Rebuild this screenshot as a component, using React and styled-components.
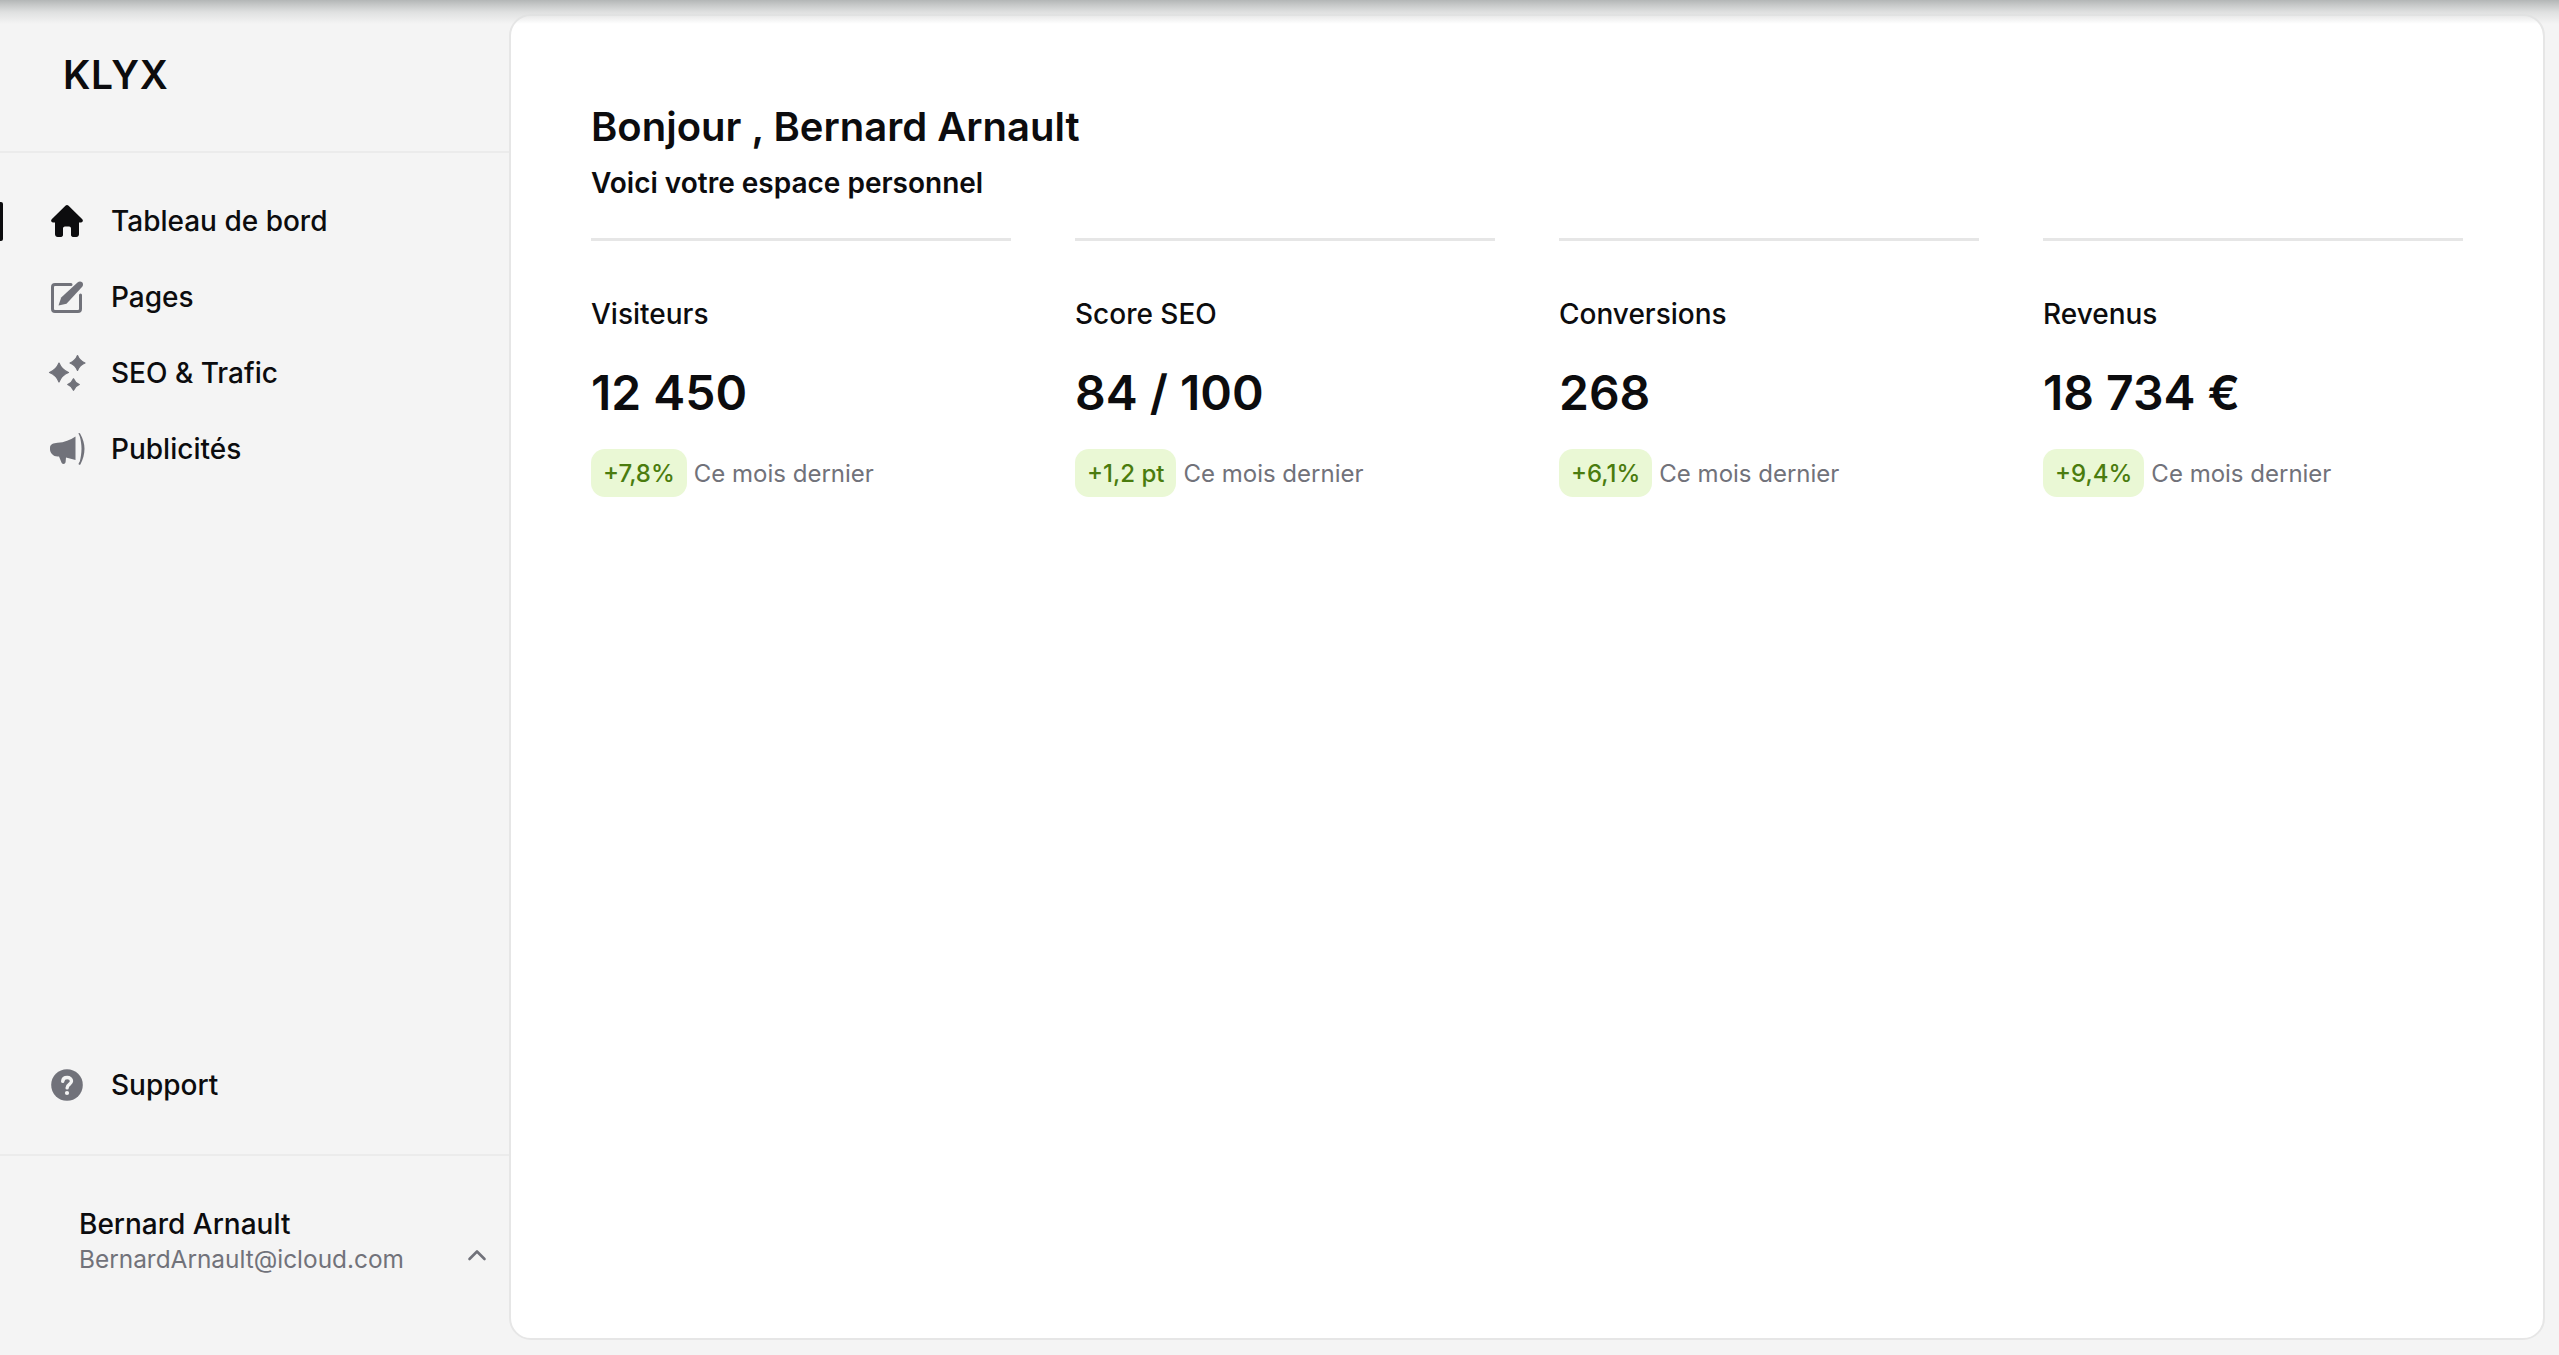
import React from "react";
import styled, { createGlobalStyle } from "styled-components";

const Global = createGlobalStyle`
  html, body { margin: 0; padding: 0; height: 100%; background: #f4f4f4; }
  body { font-family: Inter, "Liberation Sans", sans-serif; color: #0c0c0e; overflow: hidden; }
  * { box-sizing: border-box; }
`;

const Shell = styled.div`
  position: relative;
  display: flex;
  width: 2559px;
  height: 1355px;
  background: #f4f4f4;
`;
const TopShade = styled.div`
  position: absolute;
  left: 0; right: 0; top: 0;
  height: 24px;
  background: linear-gradient(180deg, #b3b6b6 0%, #c6c8c8 20%, #dfe0e0 50%, rgba(244,244,244,0) 100%);
  pointer-events: none;
`;
const Sidebar = styled.aside`
  width: 509px;
  flex: none;
  display: flex;
  flex-direction: column;
`;
const Brand = styled.div`
  height: 153px;
  padding: 51px 0 0 63px;
  border-bottom: 2px solid #ebebeb;
  font-size: 39px;
  line-height: 48px;
  font-weight: 600;
  letter-spacing: 0.7px;
`;
const NavList = styled.nav`
  display: flex;
  flex-direction: column;
  flex: 1;
  padding-top: 30px;
`;
const NavItem = styled.div`
  position: relative;
  display: flex;
  align-items: center;
  gap: 28px;
  height: 76px;
  padding-left: 51px;
  font-size: 28px;
  font-weight: 450;
  color: #0c0c0e;
  ${p => p.$bottom && "margin-top: auto; margin-bottom: 31px;"}
`;
const ActiveBar = styled.span`
  position: absolute;
  left: 0; top: 19px;
  width: 3px; height: 39px;
  background: #0c0c0e;
  border-radius: 0 2px 2px 0;
`;
const IconSlot = styled.svg`
  width: 32px; height: 32px; flex: none; overflow: visible;
  color: ${p => p.$active ? "#0c0c0e" : "#71727a"};
`;
const UserBlock = styled.div`
  height: 201px;
  border-top: 2px solid #ebebeb;
  display: flex;
  justify-content: space-between;
  padding: 50px 21px 0 79px;
`;
const UserName = styled.div`
  font-size: 28px; line-height: 36px; font-weight: 450;
`;
const UserMail = styled.div`
  font-size: 24.4px; line-height: 32px; color: #71727a; margin-top: 1px;
`;
const Chevron = styled.svg`
  width: 22px; height: 14px; margin-top: 42px; color: #71727a;
`;
const Main = styled.main`
  width: 2036px;
  height: 1326px;
  margin-top: 14px;
  background: #fff;
  border: 2px solid #e6e6e6;
  border-radius: 22px;
  padding: 83px 78px 0 80px;
`;
const Title = styled.h1`
  margin: 0;
  font-size: 40px; line-height: 56px; font-weight: 600;
`;
const Sub = styled.p`
  margin: 8px 0 0;
  font-size: 28px; line-height: 40px; font-weight: 600;
`;
const Stats = styled.div`
  display: grid;
  grid-template-columns: repeat(4, 420px);
  column-gap: 64px;
  margin-top: 35px;
`;
const Stat = styled.section`
  border-top: 3px solid #e6e6e6;
  padding-top: 53px;
`;
const StatLabel = styled.div`
  font-size: 28px; line-height: 40px; font-weight: 450;
`;
const StatValue = styled.div`
  font-size: 48px; line-height: 60px; font-weight: 600; margin-top: 29px;
`;
const StatFoot = styled.div`
  display: flex; align-items: center; gap: 7px; margin-top: 26px;
`;
const Badge = styled.span`
  height: 48px; display: inline-flex; align-items: center;
  padding: 0 12px;
  background: #eaf8d5;
  border-radius: 14px;
  color: #4a7c0e;
  font-size: 24px; font-weight: 500;
`;
const Note = styled.span`
  font-size: 24px; color: #71727a;
`;

const star = (cx, cy, r) => {
  const k = r * 0.28;
  return `M${cx} ${cy - r}Q${cx + k} ${cy - k} ${cx + r} ${cy}Q${cx + k} ${cy + k} ${cx} ${cy + r}Q${cx - k} ${cy + k} ${cx - r} ${cy}Q${cx - k} ${cy - k} ${cx} ${cy - r}Z`;
};

const HomeIcon = () => (
  <IconSlot viewBox="0 0 32 32" $active>
    <path fill="currentColor" d="M14.4.7a2.3 2.3 0 0 1 3.2 0l13.700 13.600c1.200 1.200.5 3.200-1.200 3.200H28v11.800c0 1.500-1.200 2.700-2.700 2.700h-3.400c-1 0-1.900-.8-1.900-1.900v-6.700c0-1-.8-1.900-1.900-1.900h-4.200c-1 0-1.900.8-1.900 1.900v6.700c0 1-.8 1.900-1.900 1.900H6.700C5.200 32 4 30.800 4 29.300V17.500H1.900C.2 17.500-.5 15.500.7 14.300Z" />
  </IconSlot>
);
const PagesIcon = () => (
  <IconSlot viewBox="0 0 32 32">
    <path fill="none" stroke="currentColor" strokeWidth="3" strokeLinecap="round" d="M20 3.500H4a2.500 2.500 0 0 0-2.500 2.500v22A2.500 2.500 0 0 0 4 30.500h23a2.500 2.500 0 0 0 2.500-2.500V14" />
    <path fill="currentColor" d="M7.500 24.500 10.200 16.500 26.500 1.500c1.700-1.500 5.500-1.400 5.500 2 0 1-.5 2-1 2.600L15.500 22.800Z" />
  </IconSlot>
);
const SparkIcon = () => (
  <IconSlot viewBox="0 0 32 32">
    <g fill="currentColor" stroke="currentColor" strokeWidth="1.200" strokeLinejoin="round">
      <path d={star(8, 15.5, 9.5)} />
      <path d={star(26.500, 6, 7.500)} />
      <path d={star(22.500, 27.500, 5.800)} />
    </g>
  </IconSlot>
);
const MegaIcon = () => (
  <IconSlot viewBox="0 0 32 32">
    <path fill="currentColor" d="M24.500 3.500v23.500L15 24.500l-.4 4.600c-.2 2.100-2.900 2.700-3.900.8L8 23.500H6.500C2.500 23.500-1 20-1 16.500v-1.800C-1 11.500 2.500 10 6.500 9.800c7-.4 12.500-2.800 18-6.300Z" />
    <path fill="currentColor" d="M27.500.3c.6-.5 1.400-.3 1.700.5 2.800 5 4.300 10 4.300 15 0 5.500-1.500 10.500-4 15.400-.4.900-2 .7-1.900-.4.100-.6 1-1.600 1.200-2.200 1-4 1.700-8.500 1.700-12.800 0-4.300-.7-8.500-1.700-12.200-.2-.9-1.300-2.500-1.300-3.300Z" />
  </IconSlot>
);
const HelpIcon = () => (
  <IconSlot viewBox="0 0 32 32">
    <circle cx="16" cy="16" r="15.800" fill="currentColor" />
    <path fill="none" stroke="#f4f4f4" strokeWidth="3.400" strokeLinecap="round" d="M11.700 12.300c.2-2.400 2-3.800 4.500-3.800s4.300 1.500 4.300 3.600c0 3.500-4.400 3.200-4.400 6.800" />
    <circle cx="16" cy="24" r="2.100" fill="#f4f4f4" />
  </IconSlot>
);

const stats = [
  { label: "Visiteurs", value: "12 450", delta: "+7,8%" },
  { label: "Score SEO", value: "84 / 100", delta: "+1,2 pt" },
  { label: "Conversions", value: "268", delta: "+6,1%" },
  { label: "Revenus", value: "18 734 €", delta: "+9,4%" },
];

export default function App() {
  return (
    <Shell>
      <Global />
      <Sidebar>
        <Brand>KLYX</Brand>
        <NavList>
          <NavItem><ActiveBar /><HomeIcon />Tableau de bord</NavItem>
          <NavItem><PagesIcon />Pages</NavItem>
          <NavItem><SparkIcon />SEO &amp; Trafic</NavItem>
          <NavItem><MegaIcon />Publicités</NavItem>
          <NavItem $bottom><HelpIcon />Support</NavItem>
        </NavList>
        <UserBlock>
          <div>
            <UserName>Bernard Arnault</UserName>
            <UserMail>BernardArnault@icloud.com</UserMail>
          </div>
          <Chevron viewBox="0 0 22 14">
            <path fill="none" stroke="currentColor" strokeWidth="2.600" strokeLinecap="round" strokeLinejoin="round" d="M3.500 11 11 3.500 18.500 11" />
          </Chevron>
        </UserBlock>
      </Sidebar>
      <Main>
        <Title>Bonjour , Bernard Arnault</Title>
        <Sub>Voici votre espace personnel</Sub>
        <Stats>
          {stats.map(s => (
            <Stat key={s.label}>
              <StatLabel>{s.label}</StatLabel>
              <StatValue>{s.value}</StatValue>
              <StatFoot><Badge>{s.delta}</Badge><Note>Ce mois dernier</Note></StatFoot>
            </Stat>
          ))}
        </Stats>
      </Main>
      <TopShade />
    </Shell>
  );
}
